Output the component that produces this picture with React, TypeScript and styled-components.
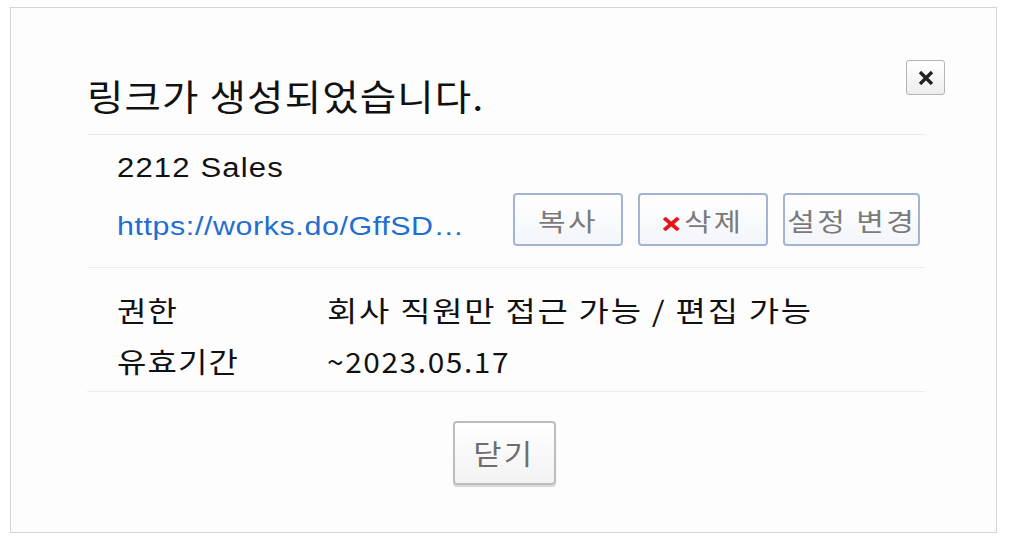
import styled, { createGlobalStyle } from 'styled-components'

const GlobalStyle = createGlobalStyle`
  body {
    margin: 0;
    background: #ffffff;
    font-family: 'Liberation Sans', 'Noto Sans CJK KR', sans-serif;
    color: #111111;
  }
`

const Frame = styled.div`
  margin: 7px 0 0 10px;
  width: 987px;
  height: 526px;
  box-sizing: border-box;
  border: 1px solid #d4d4d4;
  background: #fdfdfd;
  padding-left: 76px;
`

const Content = styled.div`
  width: 838px;
`

// the screenshot is slightly widened, so text is stretched horizontally
const Stretch = styled.span<{ $x: number; $origin?: string }>`
  display: inline-block;
  white-space: nowrap;
  transform: scaleX(${(p) => p.$x});
  transform-origin: ${(p) => p.$origin || 'left'} center;
`

const Header = styled.div`
  height: 127px;
  box-sizing: border-box;
  padding-top: 52px;
  border-bottom: 1px solid #ececec;
  display: flex;
  justify-content: space-between;
  align-items: flex-start;
`

const Title = styled.h1`
  margin: 15px 0 0 0;
  font-family: 'Noto Sans CJK KR', sans-serif;
  font-weight: 400;
  font-size: 36px;
  line-height: 40px;
  letter-spacing: 1px;
  color: #111111;
`

const CloseIcon = styled.button`
  width: 39px;
  height: 35px;
  margin-right: -20px;
  padding: 0;
  box-sizing: border-box;
  border: 1px solid #b4b4b4;
  border-radius: 3px;
  background: linear-gradient(#ffffff, #eeeeee);
  display: flex;
  align-items: center;
  justify-content: center;
`

const Section = styled.div<{ $top: number; $bottom: number }>`
  padding: ${(p) => p.$top}px 5px ${(p) => p.$bottom}px 30px;
  border-bottom: 1px solid #ececec;
`

const Name = styled.div`
  font-size: 27px;
  line-height: 36px;
  letter-spacing: 1px;
  color: #111111;
`

const LinkRow = styled.div`
  margin-top: 7px;
  height: 53px;
  display: flex;
  align-items: center;
`

const LinkText = styled.a`
  flex: 1;
  padding-top: 12px;
  font-size: 26px;
  line-height: 30px;
  letter-spacing: 0.5px;
  color: #1f6fd0;
  text-decoration: none;
`

const Actions = styled.div`
  display: flex;
  gap: 15px;
`

const ActionButton = styled.button<{ $width: number }>`
  width: ${(p) => p.$width}px;
  height: 53px;
  box-sizing: border-box;
  border: 2px solid #a3b3d4;
  border-radius: 4px;
  background: linear-gradient(#ffffff, #f3f5fa);
  font-family: 'Noto Sans CJK KR', sans-serif;
  font-size: 25px;
  letter-spacing: 2px;
  color: #7a7a7a;
  padding: 0;
  display: flex;
  align-items: center;
  justify-content: center;
  svg {
    margin-right: 3px;
    vertical-align: -1px;
  }
`

const InfoRow = styled.div`
  display: flex;
  font-family: 'Noto Sans CJK KR', sans-serif;
  font-size: 28px;
  line-height: 44px;
  color: #111111;
  & + & {
    margin-top: 7px;
  }
`

const Label = styled.div`
  width: 210px;
  letter-spacing: 1px;
`

const Value = styled.div`
  letter-spacing: 1.5px;
`

const Footer = styled.div`
  padding-top: 29px;
  display: flex;
  justify-content: center;
`

const DismissButton = styled.button`
  width: 103px;
  height: 64px;
  margin-left: -4px;
  box-sizing: border-box;
  border: 2px solid #bdbdbd;
  border-radius: 4px;
  background: linear-gradient(#ffffff, #f2f2f2);
  box-shadow: 0 2px 1px rgba(0, 0, 0, 0.15);
  font-family: 'Noto Sans CJK KR', sans-serif;
  font-size: 28px;
  letter-spacing: 2px;
  color: #6e6e6e;
  padding: 0;
`

const App = () => {
  return (
    <>
      <GlobalStyle />
      <Frame>
        <Content>
          <Header>
            <Title>
              <Stretch $x={1.1}>링크가 생성되었습니다.</Stretch>
            </Title>
            <CloseIcon aria-label="닫기">
              <svg width="16" height="14" viewBox="0 0 16 14">
                <path d="M2 1 L14 13 M14 1 L2 13" stroke="#222" strokeWidth="3.4" />
              </svg>
            </CloseIcon>
          </Header>
          <Section $top={15} $bottom={21}>
            <Name>
              <Stretch $x={1.15}>2212 Sales</Stretch>
            </Name>
            <LinkRow>
              <LinkText href="#">
                <Stretch $x={1.17}>https://works.do/GffSD…</Stretch>
              </LinkText>
              <Actions>
                <ActionButton $width={110}>
                  <Stretch $x={1.2} $origin="center">복사</Stretch>
                </ActionButton>
                <ActionButton $width={130}>
                  <Stretch $x={1.18} $origin="center">
                    <svg width="16" height="16" viewBox="0 0 16 16">
                      <path d="M2 2 L14 14 M14 2 L2 14" stroke="#e8141a" strokeWidth="3.4" />
                    </svg>
                    삭제
                  </Stretch>
                </ActionButton>
                <ActionButton $width={137}>
                  <Stretch $x={1.2} $origin="center">설정 변경</Stretch>
                </ActionButton>
              </Actions>
            </LinkRow>
          </Section>
          <Section $top={20} $bottom={8}>
            <InfoRow>
              <Label>
                <Stretch $x={1.14}>권한</Stretch>
              </Label>
              <Value>
                <Stretch $x={1.175}>회사 직원만 접근 가능 / 편집 가능</Stretch>
              </Value>
            </InfoRow>
            <InfoRow>
              <Label>
                <Stretch $x={1.14}>유효기간</Stretch>
              </Label>
              <Value>
                <Stretch $x={1.065}>~2023.05.17</Stretch>
              </Value>
            </InfoRow>
          </Section>
          <Footer>
            <DismissButton>
              <Stretch $x={1.1} $origin="center">닫기</Stretch>
            </DismissButton>
          </Footer>
        </Content>
      </Frame>
    </>
  )
}

export default App
